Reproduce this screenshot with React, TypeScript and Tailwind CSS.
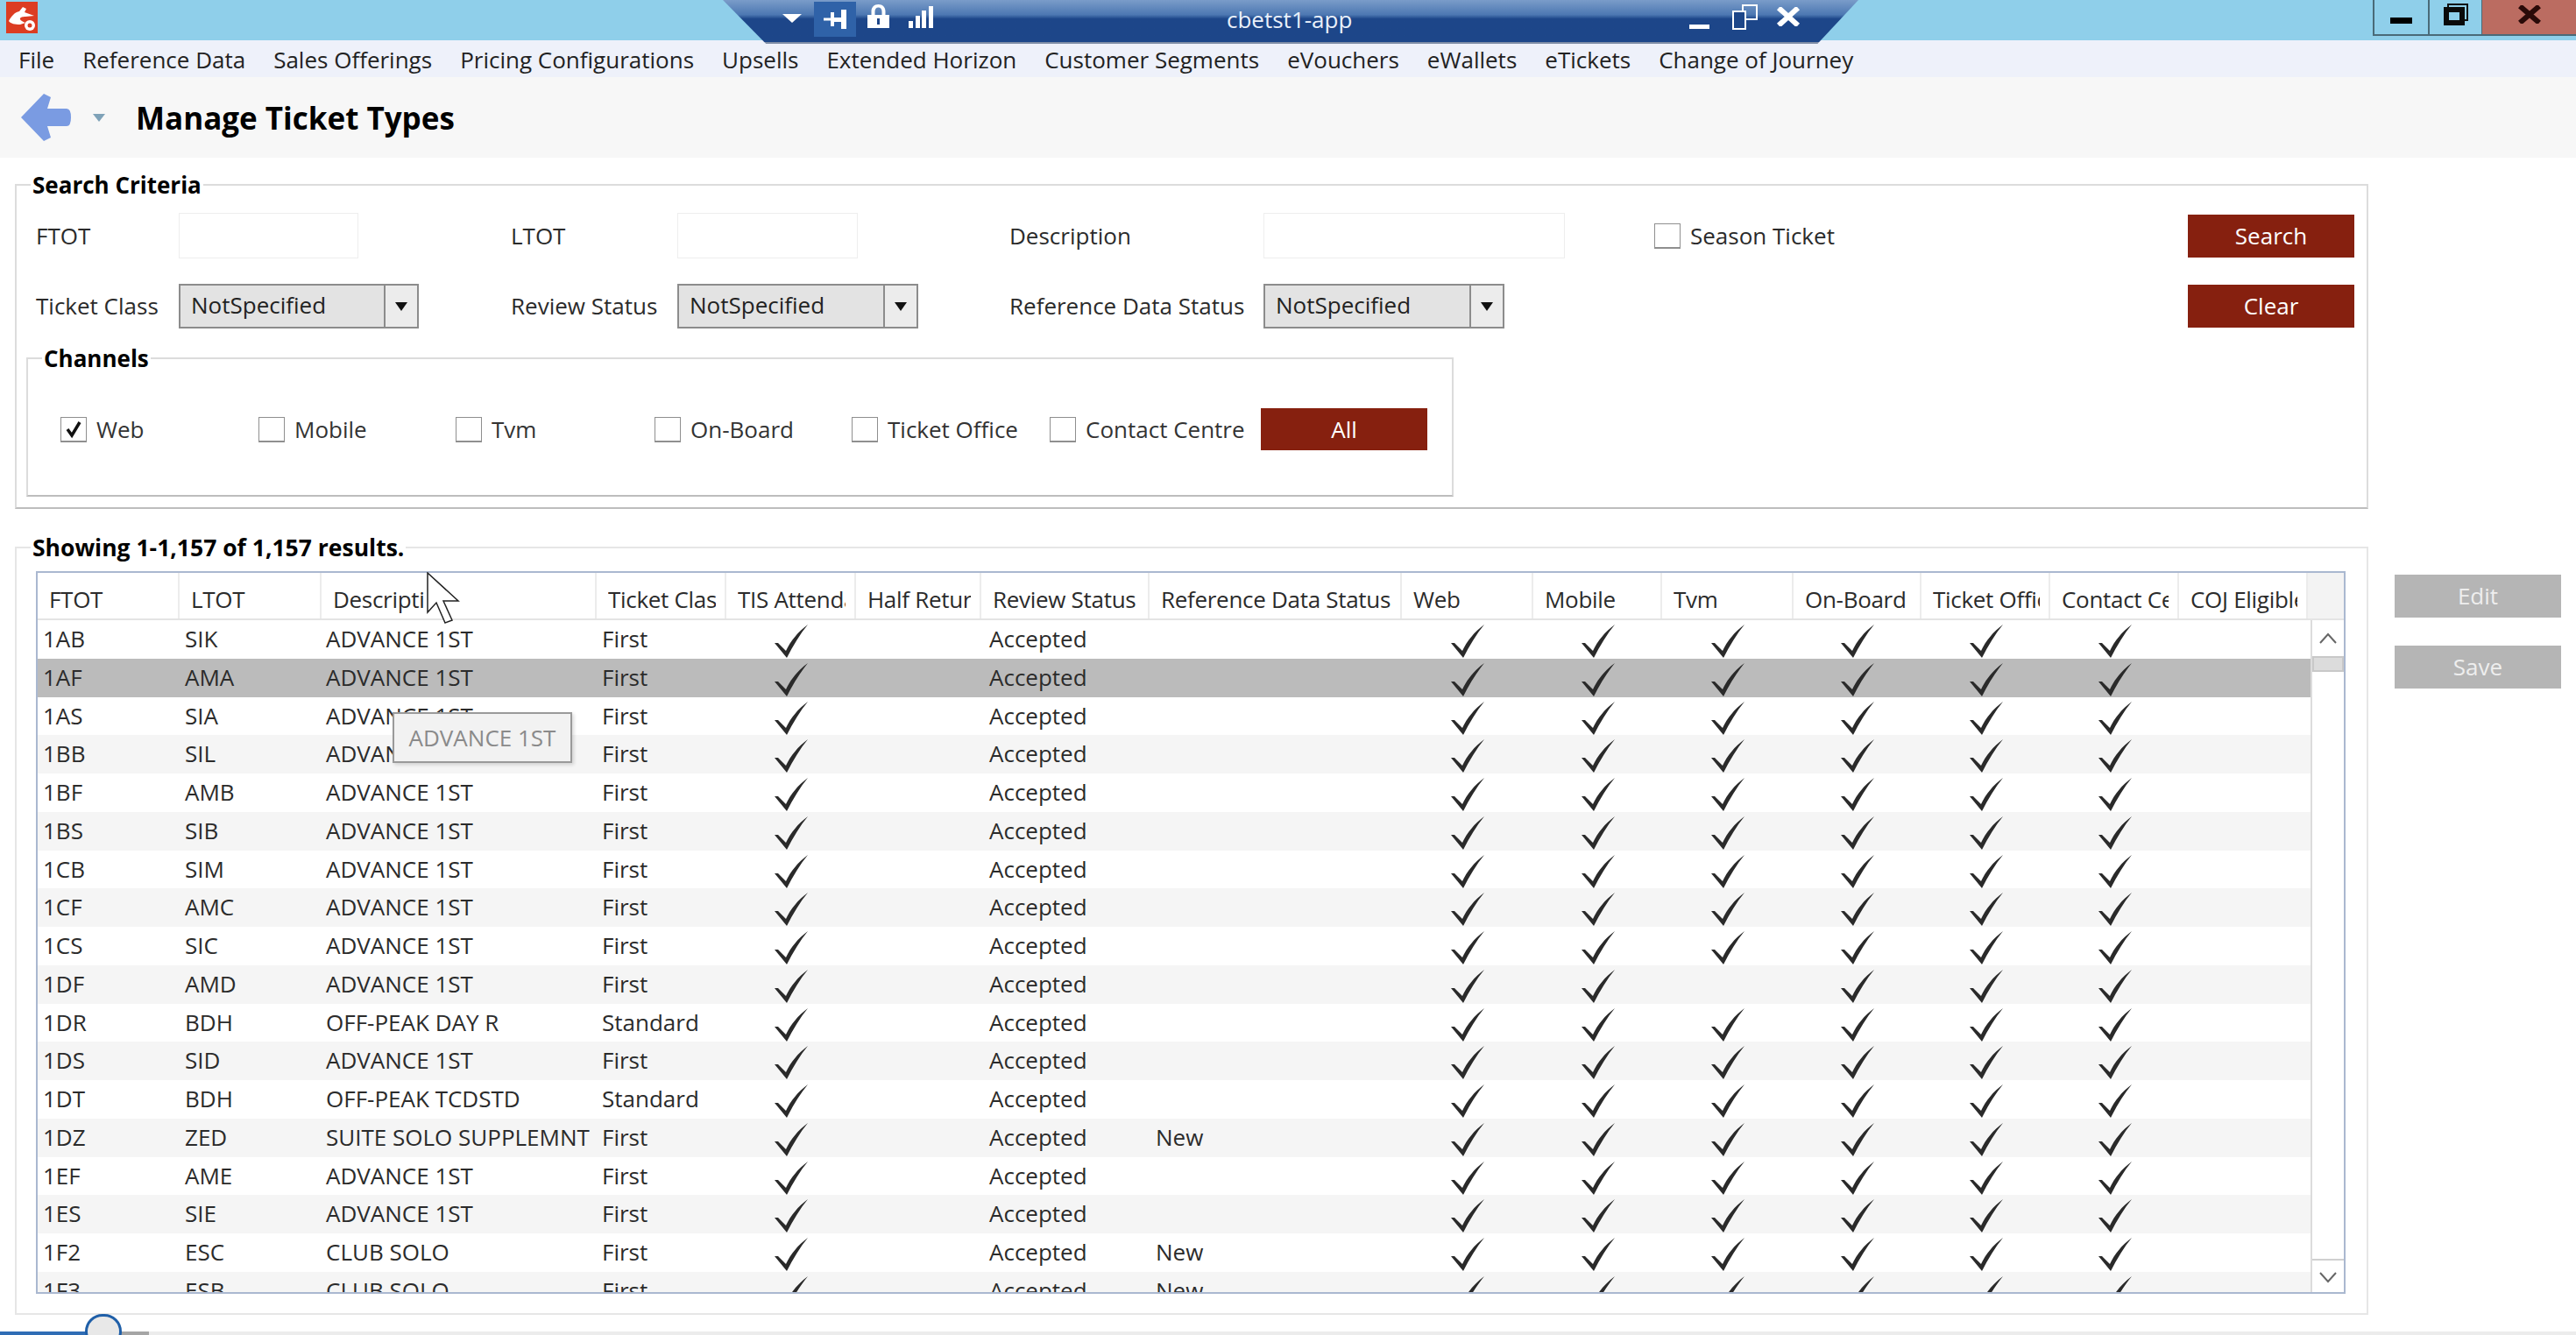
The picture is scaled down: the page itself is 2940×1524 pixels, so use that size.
import { Minus } from 'lucide-react';

const ROW_GRID =
  'grid grid-cols-[162px_162px_314px_148px_148px_143px_192px_288px_150px_147px_150px_146px_147px_147px_147px]';

const HEADERS = [
  'FTOT',
  'LTOT',
  'Descripti',
  'Ticket Class',
  'TIS Attendance',
  'Half Return',
  'Review Status',
  'Reference Data Status',
  'Web',
  'Mobile',
  'Tvm',
  'On-Board',
  'Ticket Office',
  'Contact Centre',
  'COJ Eligible',
];

const MENU = [
  'File',
  'Reference Data',
  'Sales Offerings',
  'Pricing Configurations',
  'Upsells',
  'Extended Horizon',
  'Customer Segments',
  'eVouchers',
  'eWallets',
  'eTickets',
  'Change of Journey',
];

type Row = { ftot: string; ltot: string; desc: string; cls: string; data?: string; noTvm?: boolean };

const ROWS: Row[] = [
  { ftot: '1AB', ltot: 'SIK', desc: 'ADVANCE 1ST', cls: 'First' },
  { ftot: '1AF', ltot: 'AMA', desc: 'ADVANCE 1ST', cls: 'First' },
  { ftot: '1AS', ltot: 'SIA', desc: 'ADVANCE 1ST', cls: 'First' },
  { ftot: '1BB', ltot: 'SIL', desc: 'ADVANCE 1ST', cls: 'First' },
  { ftot: '1BF', ltot: 'AMB', desc: 'ADVANCE 1ST', cls: 'First' },
  { ftot: '1BS', ltot: 'SIB', desc: 'ADVANCE 1ST', cls: 'First' },
  { ftot: '1CB', ltot: 'SIM', desc: 'ADVANCE 1ST', cls: 'First' },
  { ftot: '1CF', ltot: 'AMC', desc: 'ADVANCE 1ST', cls: 'First' },
  { ftot: '1CS', ltot: 'SIC', desc: 'ADVANCE 1ST', cls: 'First' },
  { ftot: '1DF', ltot: 'AMD', desc: 'ADVANCE 1ST', cls: 'First', noTvm: true },
  { ftot: '1DR', ltot: 'BDH', desc: 'OFF-PEAK DAY R', cls: 'Standard' },
  { ftot: '1DS', ltot: 'SID', desc: 'ADVANCE 1ST', cls: 'First' },
  { ftot: '1DT', ltot: 'BDH', desc: 'OFF-PEAK TCDSTD', cls: 'Standard' },
  { ftot: '1DZ', ltot: 'ZED', desc: 'SUITE SOLO SUPPLEMNT', cls: 'First', data: 'New' },
  { ftot: '1EF', ltot: 'AME', desc: 'ADVANCE 1ST', cls: 'First' },
  { ftot: '1ES', ltot: 'SIE', desc: 'ADVANCE 1ST', cls: 'First' },
  { ftot: '1F2', ltot: 'ESC', desc: 'CLUB SOLO', cls: 'First', data: 'New' },
  { ftot: '1F3', ltot: 'ESB', desc: 'CLUB SOLO', cls: 'First', data: 'New' },
];

function Tick() {
  return (
    <div className="flex h-full items-start justify-center pt-[5px]">
      <svg width="38" height="38" viewBox="0 0 38 38" className="fill-[#2a2a2a]">
        <path d="M0 21 L4 21 L13 30 C18 19 27 8 38 0 C29 11 21 24 14 38 Z" />
      </svg>
    </div>
  );
}

function CheckBox({ checked = false }: { checked?: boolean }) {
  return (
    <div className="flex h-[29px] w-[30px] shrink-0 items-center justify-center border border-[#8f8f8f] border-b-2 bg-white">
      {checked && (
        <svg width="20" height="22" viewBox="0 0 20 22" className="fill-none stroke-[#111] stroke-[3.5]">
          <path d="M3 11 L8 18 L17 3" />
        </svg>
      )}
    </div>
  );
}

function Channel({ label, checked, width }: { label: string; checked?: boolean; width: string }) {
  return (
    <div className={`flex items-center gap-[11px] ${width}`}>
      <CheckBox checked={checked} />
      <span className="text-[#333]">{label}</span>
    </div>
  );
}

function Select({ width }: { width: string }) {
  return (
    <div className={`flex h-[51px] items-stretch border-2 border-[#8c8c8c] bg-[#e3e3e3] ${width}`}>
      <div className="flex-1 pl-[12px] leading-[44px] text-[#222]">NotSpecified</div>
      <div className="flex w-[38px] items-center justify-center border-l-2 border-[#8c8c8c] bg-[#ececec]">
        <div className="h-0 w-0 border-x-[7px] border-t-[10px] border-x-transparent border-t-[#111]" />
      </div>
    </div>
  );
}

function RedButton({ label, width, height }: { label: string; width: string; height: string }) {
  return (
    <button className={`bg-[#86200f] text-white ${width} ${height}`}>{label}</button>
  );
}

function ConnectionBar() {
  return (
    <div className="absolute left-[825px] top-0 z-10 flex h-[50px] w-[1296px] items-start bg-gradient-to-b from-[#7a9cc9] from-0% via-[#4d78b2] via-35% to-[#1d4689] to-45% border-b-2 border-[#7f8ea6] text-white [clip-path:polygon(0_0,100%_0,96.4%_100%,3.8%_100%)]">
      <div className="ml-[68px] mt-[16px] h-0 w-0 border-x-[11px] border-t-[10px] border-x-transparent border-t-white" />
      <div className="ml-[14px] mt-[2px] flex h-[40px] w-[48px] items-center justify-center bg-[#2f62a8]">
        <svg width="26" height="22" viewBox="0 0 26 22" className="fill-white">
          <path d="M0 9.5h8V3h4v6h8V0h6v22h-6V14h-8v5H8v-6.5H0z" />
        </svg>
      </div>
      <svg width="25" height="27" viewBox="0 0 25 27" className="ml-[13px] mt-[5px] fill-white">
        <path
          fillRule="evenodd"
          d="M12.5 0c5 0 8 3.5 8 8v4H25v15H0V12h4.5V8c0-4.500 3-8 8-8zm0 3.500c-2.500 0-4 1.800-4 4.500v4h8V8c0-2.700-1.500-4.500-4-4.500zM11 16v7h3v-7z"
        />
      </svg>
      <svg width="28" height="25" viewBox="0 0 28 25" className="ml-[22px] mt-[7px] fill-white">
        <rect x="0" y="17" width="5" height="8" />
        <rect x="8" y="11" width="5" height="14" />
        <rect x="15" y="5" width="5" height="20" />
        <rect x="23" y="0" width="5" height="25" />
      </svg>
      <div className="ml-[335px] mt-[3px] text-[26px] text-[#e9f0fa]">cbetst1-app</div>
      <div className="ml-[385px] mt-[28px] h-[5px] w-[23px] bg-white" />
      <div className="relative ml-[26px] mt-[5px] h-[29px] w-[29px]">
        <div className="absolute right-0 top-0 h-[18px] w-[18px] border-2 border-white" />
        <div className="absolute bottom-0 left-0 h-[22px] w-[16px] border-2 border-white bg-[#1d4689]" />
      </div>
      <svg width="28" height="22" viewBox="0 0 28 22" className="ml-[21px] mt-[8px] fill-none stroke-white stroke-[6]">
        <path d="M3 1 L25 21 M25 1 L3 21" />
      </svg>
    </div>
  );
}

function Cursor() {
  return (
    <svg
      width="38"
      height="60"
      viewBox="0 0 38 60"
      className="absolute left-[487px] top-[653px] z-30 fill-white stroke-[#222] stroke-[1.5]"
    >
      <path d="M1 1 L1 46 L11 35 L21 58 L29 55 L19 33 L36 33 Z" />
    </svg>
  );
}

export default function App() {
  return (
    <div className="relative flex h-[1524px] w-[2940px] flex-col overflow-hidden bg-white font-['Open_Sans','Noto_Sans',sans-serif] text-[26px] text-[#2b2b2b]">
      {/* remote session title bar */}
      <div className="relative flex h-[46px] shrink-0 justify-between bg-[#8fcfea]">
        <svg width="36" height="36" viewBox="0 0 36 36" className="ml-[7px] mt-[2px]">
          <rect width="36" height="36" fill="#dc3c22" />
          <path d="M3 22 C6 16 10 12 15 11 L19 6 L23 8 L21 12 L32 16 L22 17 C16 17 12 20 22 24 L16 26 C10 26 5 25 3 22Z" fill="#fff" />
          <circle cx="27" cy="27" r="6" fill="#fff" />
          <circle cx="27" cy="27" r="2.500" fill="#dc3c22" />
        </svg>
        <ConnectionBar />
        <div className="flex h-[41px] w-[232px] items-stretch border-b-2 border-[#4a6a78]">
          <div className="flex w-[65px] items-center justify-center border-x-2 border-[#4a6a78]">
            <div className="mt-[7px] h-[7px] w-[25px] bg-black" />
          </div>
          <div className="flex w-[60px] items-start justify-center border-r border-[#4a6a78] pt-[4px]">
            <div className="relative h-[25px] w-[28px]">
              <div className="absolute right-0 top-0 h-[20px] w-[24px] border-2 border-[#111]" />
              <div className="absolute bottom-0 left-0 h-[21px] w-[24px] border-[6px] border-[#0a0a0a] bg-[#8fcfea]" />
            </div>
          </div>
          <div className="flex flex-1 items-start justify-center bg-[#bb6c61] pt-[6px]">
            <svg width="26" height="21" viewBox="0 0 26 21" className="fill-none stroke-[#2a0a08] stroke-[6]">
              <path d="M2 1 L24 20 M24 1 L2 20" />
            </svg>
          </div>
        </div>
      </div>

      {/* menu */}
      <div className="flex h-[42px] shrink-0 items-center gap-[32px] bg-[#eef1fa] pl-[21px] pt-[2px] text-[#222]">
        {MENU.map((m) => (
          <span key={m}>{m}</span>
        ))}
      </div>

      {/* page heading */}
      <div className="flex h-[92px] shrink-0 items-center bg-[#f7f7f7] pl-[24px]">
        <svg width="58" height="54" viewBox="0 0 58 54" className="fill-[#7a9be2]">
          <path d="M0 27 L26 0 L34 4 L30 17 L52 17 Q57 17 57 27 Q57 37 52 37 L30 37 L34 50 L26 54 Z" />
        </svg>
        <div className="ml-[24px] h-0 w-0 border-x-[7px] border-t-[9px] border-x-transparent border-t-[#7fa2b8]" />
        <h1 className="ml-[35px] mt-[2px] text-[35px] font-bold text-black">Manage Ticket Types</h1>
      </div>

      {/* search criteria */}
      <fieldset className="ml-[17px] mt-[12px] h-[389px] w-[2686px] shrink-0 border-2 border-[#dcdcdc] border-b-[#bdbdbd] pl-[22px]">
        <legend className="-ml-[6px] px-[2px] font-bold leading-[38px] text-black">Search Criteria</legend>
        <div className="mt-[13px] flex h-[52px] items-center">
          <span className="w-[163px]">FTOT</span>
          <div className="h-[52px] w-[205px] border border-[#eeeeee]" />
          <span className="ml-[174px] w-[190px]">LTOT</span>
          <div className="h-[52px] w-[206px] border border-[#eeeeee]" />
          <span className="ml-[173px] w-[290px]">Description</span>
          <div className="h-[52px] w-[344px] border border-[#eeeeee]" />
          <div className="ml-[102px] flex items-center gap-[11px]">
            <CheckBox />
            <span>Season Ticket</span>
          </div>
          <div className="ml-auto mr-[14px]">
            <RedButton label="Search" width="w-[190px]" height="h-[49px]" />
          </div>
        </div>
        <div className="mt-[29px] flex h-[51px] items-center">
          <span className="w-[163px]">Ticket Class</span>
          <Select width="w-[274px]" />
          <span className="ml-[105px] w-[190px]">Review Status</span>
          <Select width="w-[275px]" />
          <span className="ml-[104px] w-[290px]">Reference Data Status</span>
          <Select width="w-[275px]" />
          <div className="ml-auto mr-[14px]">
            <RedButton label="Clear" width="w-[190px]" height="h-[49px]" />
          </div>
        </div>

        <fieldset className="-ml-[11px] mt-[15px] h-[177px] w-[1629px] border-2 border-[#dcdcdc] border-b-[#bdbdbd] pl-[37px]">
          <legend className="-ml-[21px] px-[2px] font-bold leading-[38px] text-black">Channels</legend>
          <div className="mt-[38px] flex items-center">
            <Channel label="Web" checked width="w-[226px]" />
            <Channel label="Mobile" width="w-[225px]" />
            <Channel label="Tvm" width="w-[227px]" />
            <Channel label="On-Board" width="w-[225px]" />
            <Channel label="Ticket Office" width="w-[226px]" />
            <Channel label="Contact Centre" width="w-[241px]" />
            <RedButton label="All" width="w-[190px]" height="h-[48px]" />
          </div>
        </fieldset>
      </fieldset>

      {/* results */}
      <div className="mt-[25px] flex shrink-0 items-start">
        <fieldset className="ml-[17px] h-[895px] w-[2686px] shrink-0 border-2 border-[#e6e6e6] px-[22px]">
          <legend className="-ml-[6px] px-[2px] text-[26.500px] font-bold leading-[38px] text-black">
            Showing 1-1,157 of 1,157 results.
          </legend>
          <div className="relative mt-[8px] h-[825px] w-[2636px] overflow-hidden border-2 border-[#aab8d0]">
            <div className="flex h-[54px] border-b-2 border-[#e4e4e4]">
              <div className={ROW_GRID + ' w-[2591px]'}>
                {HEADERS.map((h) => (
                  <div key={h} className="h-full border-r-2 border-[#ececec] pl-[13px] pr-[10px] pt-[11px] tracking-[-0.3px]">
                    <div className="overflow-hidden whitespace-nowrap">{h}</div>
                  </div>
                ))}
              </div>
              <div className="relative flex-1 bg-[#f3f3f3]" />
            </div>

            <div className="flex h-[769px]">
              <div className="w-[2594px] overflow-hidden">
                {ROWS.map((r, i) => (
                  <div
                    key={r.ftot}
                    className={`${ROW_GRID} h-[43.75px] ${
                      i === 1 ? 'bg-[#bbbbbb]' : i % 2 === 1 ? 'bg-[#f5f5f5]' : 'bg-white'
                    }`}
                  >
                    <div className="pl-[6px] leading-[42px]">{r.ftot}</div>
                    <div className="pl-[6px] leading-[42px]">{r.ltot}</div>
                    <div className="pl-[5px] leading-[42px] whitespace-nowrap">{r.desc}</div>
                    <div className="pl-[6px] leading-[42px]">{r.cls}</div>
                    <Tick />
                    <div />
                    <div className="pl-[9px] leading-[42px]">Accepted</div>
                    <div className="pl-[7px] leading-[42px]">{r.data}</div>
                    <Tick />
                    <Tick />
                    {r.noTvm ? <div /> : <Tick />}
                    <Tick />
                    <Tick />
                    <Tick />
                    <div />
                  </div>
                ))}
              </div>
              {/* scrollbar */}
              <div className="flex flex-1 flex-col border-l-2 border-[#dcdcdc] bg-white">
                <div className="flex h-[41px] items-center justify-center">
                  <svg width="22" height="14" viewBox="0 0 22 14" className="fill-none stroke-[#666] stroke-2">
                    <path d="M2 12 L11 2 L20 12" />
                  </svg>
                </div>
                <div className="h-[18px] border-2 border-[#c8c8c8] bg-[#dcdcdc]" />
                <div className="flex-1" />
                <div className="flex h-[40px] items-center justify-center border-t-2 border-[#d0d0d0]">
                  <svg width="22" height="14" viewBox="0 0 22 14" className="fill-none stroke-[#666] stroke-2">
                    <path d="M2 2 L11 12 L20 2" />
                  </svg>
                </div>
              </div>
            </div>
          </div>
        </fieldset>

        <div className="ml-[30px] mt-[50px] flex flex-col gap-[32px]">
          <button className="h-[49px] w-[190px] bg-[#b5b5b5] text-[#eeeeee]">Edit</button>
          <button className="h-[49px] w-[190px] bg-[#b5b5b5] text-[#eeeeee]">Save</button>
        </div>
      </div>

      {/* tooltip over the grid */}
      <div className="absolute left-[448px] top-[813px] z-20 flex h-[58px] w-[205px] items-center justify-center border-2 border-[#9a9a9a] bg-[#f2f2f2] text-[#8a8a8a] shadow-[2px_2px_4px_rgba(0,0,0,0.15)]">
        ADVANCE 1ST
      </div>
      <Cursor />

      {/* video progress bar */}
      <div className="absolute bottom-0 left-0 flex h-[4px] w-full bg-[#ececec]">
        <div className="w-[98px] bg-[#2f6db5]" />
        <div className="w-[72px] bg-[#a5a5a5]" />
      </div>
      <div className="absolute left-[97px] top-[1500px] h-[40px] w-[42px] rounded-full border-[3px] border-[#1f5fa8] bg-[#e8e8e8]" />
    </div>
  );
}
